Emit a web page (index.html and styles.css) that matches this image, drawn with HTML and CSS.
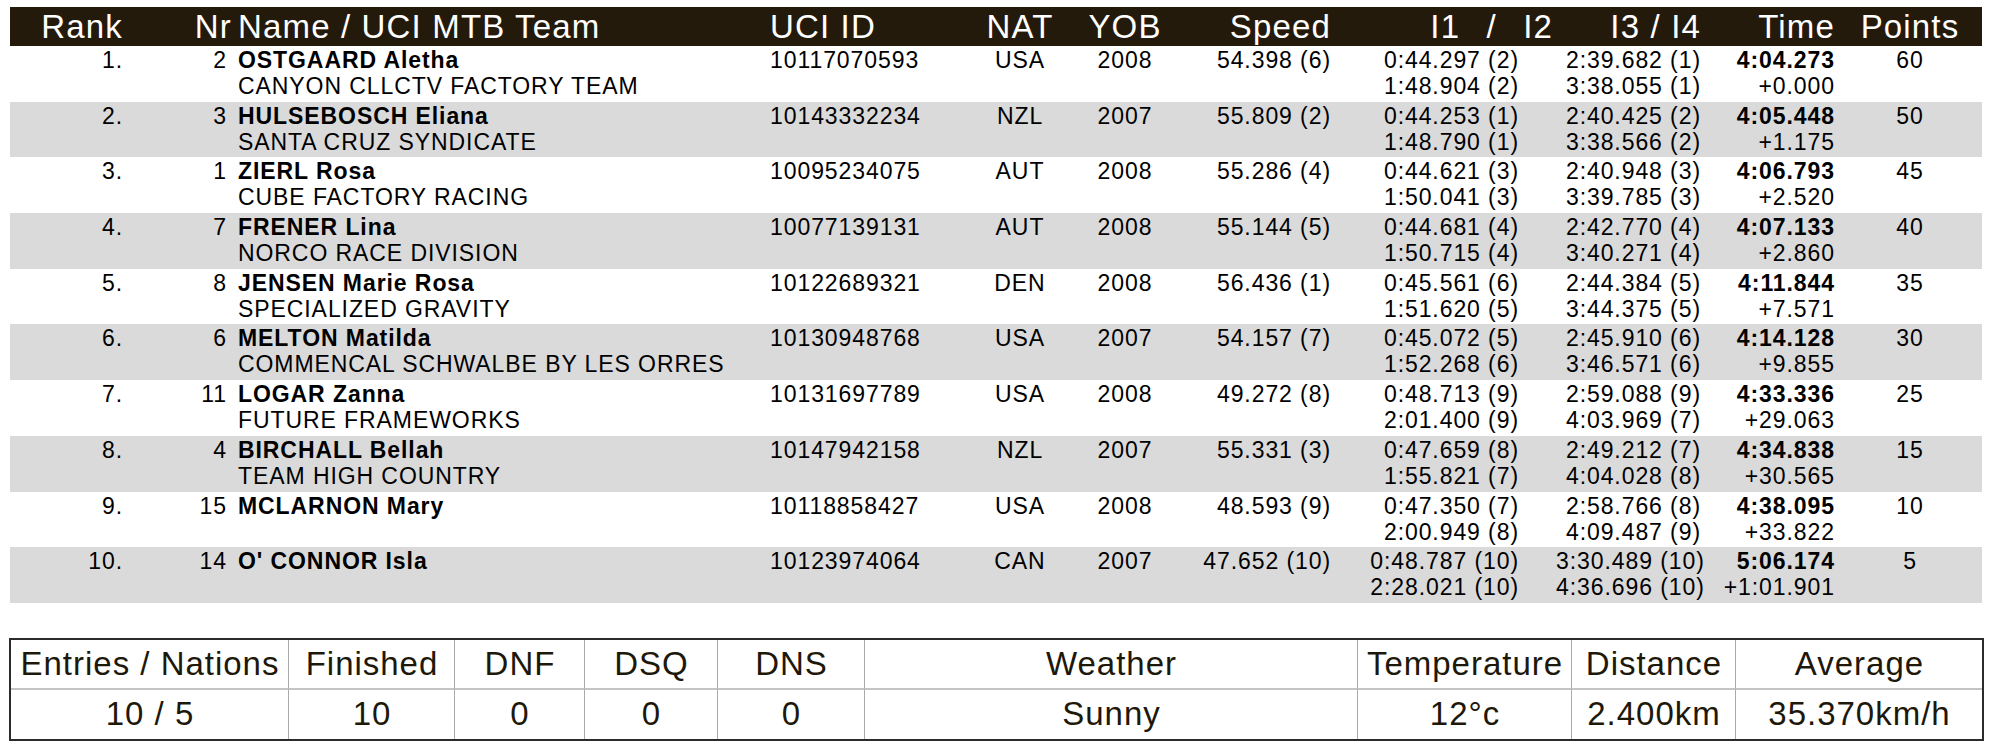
FILE: index.html
```html
<!DOCTYPE html>
<html lang="en">
<head>
<meta charset="utf-8">
<title>Results</title>
<link rel="stylesheet" href="styles.css">
</head>
<body>
<main class="sheet">
  <section class="results">
    <div class="line head">
      <div class="cell rank">Rank</div>
      <div class="cell nr">Nr</div>
      <div class="cell name">Name / UCI MTB Team</div>
      <div class="cell uci">UCI ID</div>
      <div class="cell nat">NAT</div>
      <div class="cell yob">YOB</div>
      <div class="cell speed">Speed</div>
      <div class="cell split split-head">I1 / I2</div>
      <div class="cell split2">I3 / I4</div>
      <div class="cell time">Time</div>
      <div class="cell pts">Points</div>
    </div>

    <div class="line rec">
      <div class="cell rank">1.</div>
      <div class="cell nr">2</div>
      <div class="cell name"><div class="nm">OSTGAARD Aletha</div><div>CANYON CLLCTV FACTORY TEAM</div></div>
      <div class="cell uci">10117070593</div>
      <div class="cell nat">USA</div>
      <div class="cell yob">2008</div>
      <div class="cell speed">54.398 (6)</div>
      <div class="cell split"><div>0:44.297 (2)</div><div>1:48.904 (2)</div></div>
      <div class="cell split2"><div>2:39.682 (1)</div><div>3:38.055 (1)</div></div>
      <div class="cell time"><div class="nm">4:04.273</div><div>+0.000</div></div>
      <div class="cell pts">60</div>
    </div>

    <div class="line rec alt">
      <div class="cell rank">2.</div>
      <div class="cell nr">3</div>
      <div class="cell name"><div class="nm">HULSEBOSCH Eliana</div><div>SANTA CRUZ SYNDICATE</div></div>
      <div class="cell uci">10143332234</div>
      <div class="cell nat">NZL</div>
      <div class="cell yob">2007</div>
      <div class="cell speed">55.809 (2)</div>
      <div class="cell split"><div>0:44.253 (1)</div><div>1:48.790 (1)</div></div>
      <div class="cell split2"><div>2:40.425 (2)</div><div>3:38.566 (2)</div></div>
      <div class="cell time"><div class="nm">4:05.448</div><div>+1.175</div></div>
      <div class="cell pts">50</div>
    </div>

    <div class="line rec">
      <div class="cell rank">3.</div>
      <div class="cell nr">1</div>
      <div class="cell name"><div class="nm">ZIERL Rosa</div><div>CUBE FACTORY RACING</div></div>
      <div class="cell uci">10095234075</div>
      <div class="cell nat">AUT</div>
      <div class="cell yob">2008</div>
      <div class="cell speed">55.286 (4)</div>
      <div class="cell split"><div>0:44.621 (3)</div><div>1:50.041 (3)</div></div>
      <div class="cell split2"><div>2:40.948 (3)</div><div>3:39.785 (3)</div></div>
      <div class="cell time"><div class="nm">4:06.793</div><div>+2.520</div></div>
      <div class="cell pts">45</div>
    </div>

    <div class="line rec alt">
      <div class="cell rank">4.</div>
      <div class="cell nr">7</div>
      <div class="cell name"><div class="nm">FRENER Lina</div><div>NORCO RACE DIVISION</div></div>
      <div class="cell uci">10077139131</div>
      <div class="cell nat">AUT</div>
      <div class="cell yob">2008</div>
      <div class="cell speed">55.144 (5)</div>
      <div class="cell split"><div>0:44.681 (4)</div><div>1:50.715 (4)</div></div>
      <div class="cell split2"><div>2:42.770 (4)</div><div>3:40.271 (4)</div></div>
      <div class="cell time"><div class="nm">4:07.133</div><div>+2.860</div></div>
      <div class="cell pts">40</div>
    </div>

    <div class="line rec">
      <div class="cell rank">5.</div>
      <div class="cell nr">8</div>
      <div class="cell name"><div class="nm">JENSEN Marie Rosa</div><div>SPECIALIZED GRAVITY</div></div>
      <div class="cell uci">10122689321</div>
      <div class="cell nat">DEN</div>
      <div class="cell yob">2008</div>
      <div class="cell speed">56.436 (1)</div>
      <div class="cell split"><div>0:45.561 (6)</div><div>1:51.620 (5)</div></div>
      <div class="cell split2"><div>2:44.384 (5)</div><div>3:44.375 (5)</div></div>
      <div class="cell time"><div class="nm">4:11.844</div><div>+7.571</div></div>
      <div class="cell pts">35</div>
    </div>

    <div class="line rec alt">
      <div class="cell rank">6.</div>
      <div class="cell nr">6</div>
      <div class="cell name"><div class="nm">MELTON Matilda</div><div>COMMENCAL SCHWALBE BY LES ORRES</div></div>
      <div class="cell uci">10130948768</div>
      <div class="cell nat">USA</div>
      <div class="cell yob">2007</div>
      <div class="cell speed">54.157 (7)</div>
      <div class="cell split"><div>0:45.072 (5)</div><div>1:52.268 (6)</div></div>
      <div class="cell split2"><div>2:45.910 (6)</div><div>3:46.571 (6)</div></div>
      <div class="cell time"><div class="nm">4:14.128</div><div>+9.855</div></div>
      <div class="cell pts">30</div>
    </div>

    <div class="line rec">
      <div class="cell rank">7.</div>
      <div class="cell nr">11</div>
      <div class="cell name"><div class="nm">LOGAR Zanna</div><div>FUTURE FRAMEWORKS</div></div>
      <div class="cell uci">10131697789</div>
      <div class="cell nat">USA</div>
      <div class="cell yob">2008</div>
      <div class="cell speed">49.272 (8)</div>
      <div class="cell split"><div>0:48.713 (9)</div><div>2:01.400 (9)</div></div>
      <div class="cell split2"><div>2:59.088 (9)</div><div>4:03.969 (7)</div></div>
      <div class="cell time"><div class="nm">4:33.336</div><div>+29.063</div></div>
      <div class="cell pts">25</div>
    </div>

    <div class="line rec alt">
      <div class="cell rank">8.</div>
      <div class="cell nr">4</div>
      <div class="cell name"><div class="nm">BIRCHALL Bellah</div><div>TEAM HIGH COUNTRY</div></div>
      <div class="cell uci">10147942158</div>
      <div class="cell nat">NZL</div>
      <div class="cell yob">2007</div>
      <div class="cell speed">55.331 (3)</div>
      <div class="cell split"><div>0:47.659 (8)</div><div>1:55.821 (7)</div></div>
      <div class="cell split2"><div>2:49.212 (7)</div><div>4:04.028 (8)</div></div>
      <div class="cell time"><div class="nm">4:34.838</div><div>+30.565</div></div>
      <div class="cell pts">15</div>
    </div>

    <div class="line rec">
      <div class="cell rank">9.</div>
      <div class="cell nr">15</div>
      <div class="cell name"><div class="nm">MCLARNON Mary</div></div>
      <div class="cell uci">10118858427</div>
      <div class="cell nat">USA</div>
      <div class="cell yob">2008</div>
      <div class="cell speed">48.593 (9)</div>
      <div class="cell split"><div>0:47.350 (7)</div><div>2:00.949 (8)</div></div>
      <div class="cell split2"><div>2:58.766 (8)</div><div>4:09.487 (9)</div></div>
      <div class="cell time"><div class="nm">4:38.095</div><div>+33.822</div></div>
      <div class="cell pts">10</div>
    </div>

    <div class="line rec alt">
      <div class="cell rank">10.</div>
      <div class="cell nr">14</div>
      <div class="cell name"><div class="nm">O' CONNOR Isla</div></div>
      <div class="cell uci">10123974064</div>
      <div class="cell nat">CAN</div>
      <div class="cell yob">2007</div>
      <div class="cell speed">47.652 (10)</div>
      <div class="cell split"><div>0:48.787 (10)</div><div>2:28.021 (10)</div></div>
      <div class="cell split2"><div>3:30.489 (10)</div><div>4:36.696 (10)</div></div>
      <div class="cell time"><div class="nm">5:06.174</div><div>+1:01.901</div></div>
      <div class="cell pts">5</div>
    </div>
  </section>

  <section class="summary">
    <div class="s-cell s-head">Entries / Nations</div>
    <div class="s-cell s-head">Finished</div>
    <div class="s-cell s-head">DNF</div>
    <div class="s-cell s-head">DSQ</div>
    <div class="s-cell s-head">DNS</div>
    <div class="s-cell s-head">Weather</div>
    <div class="s-cell s-head">Temperature</div>
    <div class="s-cell s-head">Distance</div>
    <div class="s-cell s-head">Average</div>
    <div class="s-cell">10 / 5</div>
    <div class="s-cell">10</div>
    <div class="s-cell">0</div>
    <div class="s-cell">0</div>
    <div class="s-cell">0</div>
    <div class="s-cell">Sunny</div>
    <div class="s-cell">12°c</div>
    <div class="s-cell">2.400km</div>
    <div class="s-cell">35.370km/h</div>
  </section>
</main>
</body>
</html>
```

FILE: styles.css
```css
html, body {
  margin: 0;
  padding: 0;
  background: #ffffff;
}

body {
  font-family: "Liberation Sans", Arial, Helvetica, sans-serif;
  color: #000000;
}

.sheet {
  width: 1972px;
  padding: 7px 18px 0 10px;
}

.line {
  display: grid;
  grid-template-columns: 114px 108px 538px 190px 120px 90px 164px 222px 148px 134px 144px;
  box-sizing: border-box;
}

.head {
  height: 39px;
  background: #241a0b;
  color: #ffffff;
  font-size: 33px;
  line-height: 40px;
  letter-spacing: 0.035em;
}

.rec {
  height: 55.7px;
  padding-top: 1px;
  font-size: 23px;
  line-height: 26px;
  letter-spacing: 0.04em;
}

.rec.alt {
  background: #dadada;
}

.cell {
  white-space: nowrap;
}

.rank { text-align: right; padding-right: 1px; }
.nr { text-align: right; padding-right: 5px; }
.name { text-align: left; padding-left: 6px; }
.uci { text-align: left; }
.nat { text-align: center; }
.yob { text-align: center; }
.speed { text-align: right; padding-right: 3px; }
.split { text-align: right; padding-right: 37px; }
.split-head { padding-right: 3px; word-spacing: 16px; }
.split2 { text-align: right; padding-right: 3px; }
.time { text-align: right; padding-right: 3px; }
.pts { text-align: center; }

.head .rank { padding-right: 1px; }
.head .nr { padding-right: 0; }
.head .speed,
.head .split2,
.head .time { padding-right: 3px; }

.nm {
  font-weight: bold;
}

.summary {
  margin-top: 35px;
  margin-left: -1px;
  width: 1975px;
  box-sizing: border-box;
  border: 2px solid #2b2b2b;
  display: grid;
  grid-template-columns: 277px 166px 130px 133px 147px 493px 214px 164px 247px;
  grid-template-rows: 50px 49px;
  font-size: 33px;
  letter-spacing: 0.03em;
  color: #1d1809;
}

.s-cell {
  display: flex;
  align-items: center;
  justify-content: center;
  padding-left: 0.03em;
  border-left: 1px solid #a9a9a9;
  white-space: nowrap;
}

.s-cell:nth-child(9n + 1) {
  border-left: none;
}

.s-head {
  border-bottom: 2px solid #c4c4c4;
}
```
